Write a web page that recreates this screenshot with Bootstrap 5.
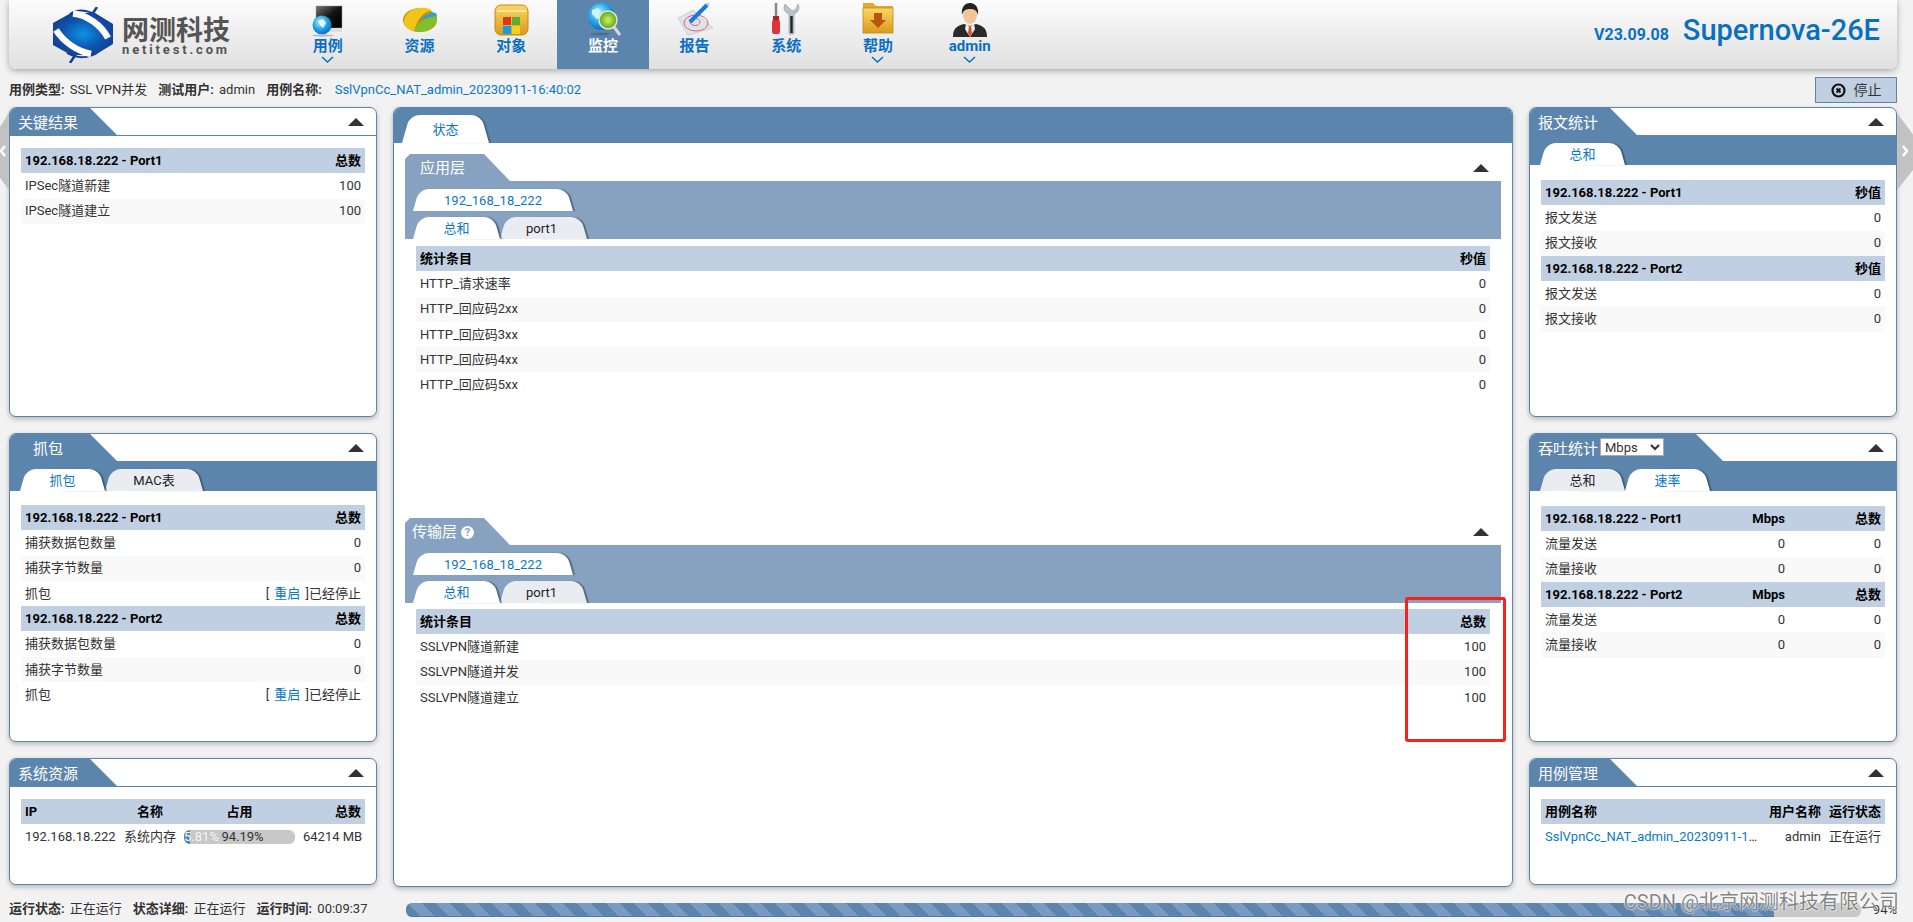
<!DOCTYPE html>
<html lang="zh">
<head>
<meta charset="UTF-8" />
<title>Supernova-26E 监控</title>
<link href="https://cdn.jsdelivr.net/npm/bootstrap@5.3.2/dist/css/bootstrap.min.css" rel="stylesheet" />
<style>
  html, body { height: 100%; }
  body { background: #f2f2f2; font: 13px/1.2 Roboto, "Noto Sans CJK SC", sans-serif; color: #333; overflow: hidden; position: relative; }
  a { color: #0a78c8; text-decoration: none; }

  /* header */
  .top-bar { height: 69px; margin: 0 16px 0 9px; background: linear-gradient(#fcfcfc, #e0e0e0); border-radius: 0 0 7px 7px; box-shadow: 0 2px 6px rgba(0,0,0,.3); }
  .logo-box { width: 273px; padding-left: 44px; }
  .logo-name { font-size: 27px; line-height: 30px; font-weight: 700; color: #555; margin: 2px 0 -3px 1px; }
  .logo-url { font-size: 13px; line-height: 13px; font-weight: 700; color: #555; letter-spacing: 2.85px; margin-left: 1px; }
  .nav-cell { width: 91.7px; height: 69px; padding: 3px 0 0; color: #0a6fc2; font-size: 15px; line-height: 18px; font-weight: 700; text-align: center; }
  .nav-cell:hover { color: #0a6fc2; }
  .nav-cell.on { background: #5c85ae; color: #fff; }
  .nav-cell svg.ico { display: block; margin: 0 auto; width: 40px; height: 34px; }
  .nav-cell .chev { display: block; margin: 1px auto 0; width: 13px; height: 7px; }
  .ver-box { color: #0a6fc2; padding-right: 17px; padding-top: 13px; }
  .ver-no { font-size: 16px; font-weight: 700; margin-right: 14px; }
  .ver-name { font-size: 29px; font-weight: 500; }

  /* info row */
  .info-row { height: 26px; margin: 8px 16px 4px 9px; }
  .lbl { font-weight: 600; margin-right: 2px; }
  .grp { margin-left: 11px; }
  .stop-btn { width: 82px; height: 26px; padding: 0; background: #c0d0e2; border: 1px solid #5c85ae; border-radius: 0; font-size: 14px; color: #333; }

  /* panels */
  .main-row { height: 780px; margin: 0 16px 0 9px; gap: 16px; }
  .side-col { width: 368px; flex: none; gap: 16px; }
  .pane { background: #fff; border: 1px solid #5c85ae; border-radius: 7px; overflow: hidden; box-shadow: 0 2px 5px rgba(0,0,0,.25); }
  .pane-a { height: 310px; }
  .pane-b { height: 309px; }
  .pane-c { height: 127px; }
  .pane-head { height: 27px; border-bottom: 1px solid #5c85ae; box-sizing: content-box; }
  .pane-head.plain { border-bottom: 0; }
  .slant-tab { width: 107px; height: 100%; background: #5c85ae; color: #fff; font-size: 15px; padding: 6px 0 0 8px; clip-path: polygon(0 0, calc(100% - 27px) 0, 100% 100%, 0 100%); }
  .slant-tab.wide { width: 193px; }
  .slant-tab.ind2 { padding-left: 23px; }
  .fold-mark { width: 0; height: 0; margin-right: 12px; border-left: 8px solid transparent; border-right: 8px solid transparent; border-bottom: 8px solid #333; }
  .rate-select { width: 64px; height: 18px; margin: -2px 0 0 2px; padding: 0; font-size: 13px; border: 1px solid #aaa; background-color: #fff; color: #333; }

  /* strips with tabs */
  .tab-strip { height: 30px; padding: 8px 0 0 10px; background: #5c85ae; }
  .soft-tab { position: relative; height: 22px; color: #222; line-height: 23px; text-align: center; font-size: 13px; z-index: 0; }
  .soft-tab::before, .soft-tab::after { content: ""; position: absolute; top: 0; bottom: 0; width: 55%; background: #e9edf2; z-index: -1; transform-origin: bottom; }
  .soft-tab::before { left: 0; border-radius: 9px 0 0 0; transform: skewX(-16deg); }
  .soft-tab::after { right: 0; border-radius: 0 9px 0 0; transform: skewX(16deg); box-shadow: 2px 0 1px rgba(50,60,70,.55); }
  .soft-tab.on { color: #0a78c8; z-index: 1; }
  .soft-tab.on::before, .soft-tab.on::after { background: #fff; }
  .w-85 { width: 85px; }
  .w-87 { width: 87px; }
  .w-97 { width: 98px; }
  .w-160 { width: 160px; }
  .pane-body { padding: 15px 11px 0 11px; }
  .pane-body.near { padding-top: 12px; }
  .pane-body.snug { padding-top: 14px; }

  /* tables */
  .stat-tb { table-layout: fixed; font-size: 13px; --bs-table-bg: transparent; }
  .stat-tb>tbody>tr>* { height: 25.3px; padding: 0 4px; border-bottom: 0; vertical-align: middle; color: #333; box-shadow: none; white-space: nowrap; }
  .stat-tb>tbody>tr>th { background: #c0d0e2; color: #000; font-weight: 700; }
  .stat-tb>tbody>tr.alt>td { background: #f9f9f9; }
  .stat-tb a.re-link { margin: 0 2px; }
  .num { text-align: right; }
  .c-ip { width: 99px; }
  .c-nm { width: 60px; text-align: center; }
  .c-use { width: 119px; text-align: center; }
  .c-case { width: 221px; }
  .c-usr { width: 63px; text-align: right; }
  .c-st { width: 60px; text-align: right; }
  .c-mb { width: 96px; text-align: right; }
  .mem-bar { height: 14px; border-radius: 6px; background: #c8c8c8; font-size: 13px; line-height: 14px; }
  .mem-bar .progress-bar { overflow: visible; background: #5c85ae; color: #f4f4f4; display: block; text-align: left; white-space: nowrap; }
  .mem-rest { margin-left: 31px; color: #333; }

  /* centre */
  .mid-pane { position: relative; flex: 1 1 0; }
  .mid-strip { height: 35px; padding: 7px 0 0 8px; background: #5c85ae; }
  .big-tab { width: 87px; height: 28px; line-height: 30px; }
  .big-tab::after { box-shadow: 2px 0 1px rgba(50,60,70,.4); }
  .sec-wrap { padding: 11px 11px 0; }
  .sect { height: 364px; }
  .sec-head { height: 27px; }
  .sec-tab { width: 105px; height: 100%; background: #86a2c0; color: #fff; font-size: 15px; padding: 5px 0 0 15px; clip-path: polygon(0 5px, 5px 0, 79px 0, 100% 100%, 0 100%); }
  .sec-tab.ind { padding-left: 7px; }
  .q-mark { display: inline-block; width: 13px; height: 13px; margin-left: 4px; border-radius: 50%; background: #fff; color: #86a2c0; font: 700 11px/13px Roboto, sans-serif; text-align: center; vertical-align: 1px; }
  .sec-strip { height: 58px; padding: 8px 0 0 8px; background: #86a2c0; gap: 6px; }
  .sec-tb { padding: 7px 11px 0; }
  .sec-tb.tight { padding-top: 6px; }
  .red-box { position: absolute; right: 6px; top: 489px; width: 101px; height: 145px; border: 3px solid #f5231a; border-radius: 3px; pointer-events: none; }

  /* footer */
  .foot-row { height: 18px; margin: 14px 16px 0 9px; }
  .foot-text { width: 397px; flex: none; padding-bottom: 2px; }
  .run-bar { height: 14px; flex: 1 1 0; border-radius: 6px; background: #c8c8c8; }
  .run-bar .progress-bar { background: repeating-linear-gradient(45deg, #5c85ae 0 10px, #7a9abf 10px 20px); border-bottom: 1px solid #4f7aa5; }
  .run-pct { width: 36px; flex: none; text-align: right; font-size: 13px; }

  /* overlays */
  .side-flap { position: absolute; top: 113px; height: 77px; background: #c2c2c2; }
  .side-flap svg { display: block; position: absolute; top: 32px; }
  .flap-l { left: 0; width: 9px; clip-path: polygon(100% 0, 0 18%, 0 84%, 100% 100%); }
  .flap-l svg { left: 0; }
  .flap-r { right: 0; width: 16px; clip-path: polygon(0 0, 100% 28%, 100% 74%, 0 100%); }
  .flap-r svg { left: 4px; }
  .water-mark { position: absolute; right: 14px; bottom: 8px; font-size: 20px; line-height: 24px; color: rgba(110,110,110,.85); text-shadow: 0 0 2px #fff, 0 0 2px #fff; white-space: nowrap; }
</style>
</head>
<body>

<svg width="0" height="0" class="position-absolute">
  <defs>
    <radialGradient id="hexFill" cx="50%" cy="50%" r="55%"><stop offset="0" stop-color="#0b93e4"/><stop offset=".6" stop-color="#0f55ae"/><stop offset="1" stop-color="#123f92"/></radialGradient>
    <linearGradient id="gold" x1="0" y1="0" x2="0" y2="1"><stop offset="0" stop-color="#fbd766"/><stop offset="1" stop-color="#d99a1c"/></linearGradient>
    <linearGradient id="screen" x1="0" y1="0" x2="1" y2="1"><stop offset="0" stop-color="#777"/><stop offset=".5" stop-color="#111"/><stop offset="1" stop-color="#000"/></linearGradient>
    <radialGradient id="ball" cx="40%" cy="35%" r="65%"><stop offset="0" stop-color="#bfeeff"/><stop offset=".55" stop-color="#28a9ea"/><stop offset="1" stop-color="#0a6fc2"/></radialGradient>
    <radialGradient id="lens" cx="50%" cy="50%" r="50%"><stop offset="0" stop-color="#d4ee6a"/><stop offset="1" stop-color="#5aa516"/></radialGradient>
  </defs>
</svg>

<!-- 顶部导航 -->
<header class="top-bar d-flex">
  <div class="logo-box d-flex align-items-center">
    <svg width="60" height="56" viewBox="0 0 60 56" class="me-2">
      <path d="M36 12 44 0M25 44 17 56" stroke="#123f92" stroke-width="2.5" fill="none"/>
      <path d="M17 7C26 1 36 3 46 10M14 46C24 52 36 51 44 46" stroke="#123f92" stroke-width="2" fill="none"/>
      <polygon points="0,16 18,6 42,6 60,17 60,37 42,48 18,48 0,38" fill="url(#hexFill)"/>
      <path d="M20 6.5C34 8 48 18 55 31" stroke="#fff" stroke-width="6.5" fill="none"/>
      <path d="M3 23C11 35 24 44 38 47" stroke="#fff" stroke-width="6.5" fill="none"/>
    </svg>
    <div>
      <div class="logo-name">网测科技</div>
      <div class="logo-url">netitest.com</div>
    </div>
  </div>

  <nav class="nav flex-nowrap">
    <a class="nav-cell" href="#">
      <svg class="ico" viewBox="0 0 40 34"><rect x="8" y="3" width="26" height="22" fill="url(#screen)" stroke="#999" stroke-width=".5"/><rect x="14" y="25" width="20" height="4" fill="#ddd"/><circle cx="14" cy="22" r="9.5" fill="url(#ball)"/><path d="M10 18l5-2 3 4-3 5-3-3z" fill="#e6f6fc"/><ellipse cx="15" cy="32.5" rx="11" ry="1.2" fill="#bbb"/></svg>
      用例
      <svg class="chev" viewBox="0 0 13 7"><path d="M1 1l5.500 5L12 1" fill="none" stroke="#0a6fc2" stroke-width="1.500"/></svg>
    </a>
    <a class="nav-cell" href="#">
      <svg class="ico" viewBox="0 0 40 34"><ellipse cx="20" cy="17" rx="17" ry="12" fill="#c79205"/><path d="M4 19C4 7 20 1 32 7 24 9 18 14 14 28 8 27 4 23 4 19z" fill="#f2c41a"/><path d="M14 28C18 19 25 15 37 13 38 18 34 25 25 28 21 29 17 29 14 28z" fill="#7dc12b"/><path d="M19 18C24 12 30 9 36 10l1 3C30 14 25 15 19 18z" fill="#29a3df"/></svg>
      资源
    </a>
    <a class="nav-cell" href="#">
      <svg class="ico" viewBox="0 0 40 34"><rect x="4" y="2" width="33" height="30" rx="6" fill="url(#gold)" stroke="#c48a12"/><path d="M6 8h29" stroke="#fff2b8" stroke-width="1.500"/><rect x="12" y="14" width="8" height="8" fill="#d9381e"/><rect x="21" y="14" width="8" height="8" fill="#5db02e"/><rect x="12" y="23" width="8" height="8" fill="#1b9ed8"/><rect x="21" y="23" width="8" height="8" fill="#f2d21b"/></svg>
      对象
    </a>
    <a class="nav-cell on" href="#">
      <svg class="ico" viewBox="0 0 40 34"><circle cx="18.500" cy="13.500" r="13.500" fill="url(#ball)"/><path d="M9 7l6-2 3 3-2 3 3 3-5 2-5-5z" fill="#d4f2fc"/><path d="M31 24l6 8" stroke="#d8d8d8" stroke-width="3"/><circle cx="25" cy="17" r="9" fill="url(#lens)" stroke="#d9e6d0" stroke-width="1.500"/><ellipse cx="17" cy="31" rx="10" ry="1.500" fill="#4a6e92"/></svg>
      监控
    </a>
    <a class="nav-cell" href="#">
      <svg class="ico" viewBox="0 0 40 34"><polygon points="3,15 18,7 38,25 13,32" fill="#dde3ea" stroke="#bcc5cf" stroke-width=".7"/><ellipse cx="21" cy="20" rx="12" ry="8" fill="none" stroke="#e8606a" stroke-width="1"/><ellipse cx="20" cy="19" rx="5" ry="3.500" fill="none" stroke="#e8606a"/><path d="M15 19 32 2" stroke="#1b78d8" stroke-width="4"/><path d="M32 2l2-2" stroke="#9cd0f4" stroke-width="3"/></svg>
      报告
    </a>
    <a class="nav-cell" href="#">
      <svg class="ico" viewBox="0 0 40 34"><path d="M10 0v14" stroke="#888" stroke-width="2.500"/><rect x="7" y="13" width="6" height="5" fill="#b9231f"/><rect x="6" y="17" width="8" height="14" rx="2" fill="#d9363a"/><path d="M19 1c-2 4-1 8 4 10v19c0 2 5 2 5 0V11c5-2 6-6 4-10l-2 5-3 2-3-2z" fill="#b7c4cd" stroke="#8b99a3" stroke-width=".6"/><rect x="24.300" y="13" width="2.400" height="17" fill="#222"/></svg>
      系统
    </a>
    <a class="nav-cell" href="#">
      <svg class="ico" viewBox="0 0 40 34"><path d="M5 0h10l3 3h17v27H5z" fill="#e2a92a"/><rect x="5" y="5" width="30" height="25" fill="url(#gold)" stroke="#c48a12" stroke-width=".8"/><polygon points="16,10 24,10 24,17 28,17 20,25 12,17 16,17" fill="#b9560c"/></svg>
      帮助
      <svg class="chev" viewBox="0 0 13 7"><path d="M1 1l5.500 5L12 1" fill="none" stroke="#0a6fc2" stroke-width="1.500"/></svg>
    </a>
    <a class="nav-cell" href="#">
      <svg class="ico" viewBox="0 0 40 34"><path d="M3 34c0-8 3-11 11-13l6 2 6-2c8 2 11 5 11 13z" fill="#2a2a2a"/><path d="M16 21l4 3 4-3 1 5-5 8-5-8z" fill="#f2f2f2"/><path d="M19 23h2l1 7-2 4-2-4z" fill="#d9541e"/><ellipse cx="20" cy="12" rx="7" ry="9" fill="#f3c49a"/><path d="M12 12C11 4 15 0 20 0s9 4 8 12c-1-4-3-6-8-6s-7 2-8 6z" fill="#222"/></svg>
      admin
      <svg class="chev" viewBox="0 0 13 7"><path d="M1 1l5.500 5L12 1" fill="none" stroke="#0a6fc2" stroke-width="1.500"/></svg>
    </a>
  </nav>

  <div class="ver-box ms-auto d-flex align-items-baseline">
    <span class="ver-no">V23.09.08</span>
    <span class="ver-name">Supernova-26E</span>
  </div>
</header>

<!-- 用例信息 -->
<div class="info-row d-flex align-items-center justify-content-between">
  <div class="d-flex">
    <span><b class="lbl">用例类型:</b> SSL VPN并发</span>
    <span class="grp"><b class="lbl">测试用户:</b> admin</span>
    <span class="grp"><b class="lbl">用例名称:</b></span>
    <a class="grp" href="#">SslVpnCc_NAT_admin_20230911-16:40:02</a>
  </div>
  <button class="btn stop-btn d-flex align-items-center justify-content-center gap-2">
    <svg width="15" height="15" viewBox="0 0 15 15"><circle cx="7.5" cy="7.5" r="6" fill="none" stroke="#111" stroke-width="2.200"/><path d="M5.500 5.500l4 4M9.500 5.500l-4 4" stroke="#111" stroke-width="2"/></svg>
    停止
  </button>
</div>

<main class="main-row d-flex">
  <!-- 左列 -->
  <div class="side-col d-flex flex-column">
    <section class="pane pane-a">
      <div class="pane-head d-flex justify-content-between align-items-center">
        <div class="slant-tab">关键结果</div><i class="fold-mark"></i>
      </div>
      <div class="pane-body near">
        <table class="table mb-0 stat-tb"><tbody>
          <tr><th>192.168.18.222 - Port1</th><th class="num">总数</th></tr>
          <tr><td>IPSec隧道新建</td><td class="num">100</td></tr>
          <tr class="alt"><td>IPSec隧道建立</td><td class="num">100</td></tr>
        </tbody></table>
      </div>
    </section>

    <section class="pane pane-b">
      <div class="pane-head plain d-flex justify-content-between align-items-center">
        <div class="slant-tab ind2">抓包</div><i class="fold-mark"></i>
      </div>
      <div class="tab-strip d-flex">
        <div class="soft-tab on w-85">抓包</div>
        <div class="soft-tab w-97">MAC表</div>
      </div>
      <div class="pane-body snug">
        <table class="table mb-0 stat-tb"><tbody>
          <tr><th>192.168.18.222 - Port1</th><th class="num">总数</th></tr>
          <tr><td>捕获数据包数量</td><td class="num">0</td></tr>
          <tr class="alt"><td>捕获字节数量</td><td class="num">0</td></tr>
          <tr><td>抓包</td><td class="num">[ <a class="re-link" href="#">重启</a> ]已经停止</td></tr>
          <tr><th>192.168.18.222 - Port2</th><th class="num">总数</th></tr>
          <tr><td>捕获数据包数量</td><td class="num">0</td></tr>
          <tr class="alt"><td>捕获字节数量</td><td class="num">0</td></tr>
          <tr><td>抓包</td><td class="num">[ <a class="re-link" href="#">重启</a> ]已经停止</td></tr>
        </tbody></table>
      </div>
    </section>

    <section class="pane pane-c">
      <div class="pane-head d-flex justify-content-between align-items-center">
        <div class="slant-tab">系统资源</div><i class="fold-mark"></i>
      </div>
      <div class="pane-body near">
        <table class="table mb-0 stat-tb"><tbody>
          <tr><th class="c-ip">IP</th><th class="c-nm">名称</th><th class="c-use">占用</th><th class="num">总数</th></tr>
          <tr>
            <td>192.168.18.222</td><td class="c-nm">系统内存</td>
            <td><div class="progress mem-bar"><div class="progress-bar" style="width:5.81%">5.81%</div><span class="mem-rest">94.19%</span></div></td>
            <td class="num">64214 MB</td>
          </tr>
        </tbody></table>
      </div>
    </section>
  </div>

  <!-- 中列 -->
  <section class="pane mid-pane">
    <div class="mid-strip"><div class="soft-tab on big-tab">状态</div></div>
    <div class="sec-wrap">
      <div class="sect">
        <div class="sec-head d-flex justify-content-between align-items-center">
          <div class="sec-tab">应用层</div><i class="fold-mark"></i>
        </div>
        <div class="sec-strip d-flex flex-column">
          <div class="d-flex"><div class="soft-tab on w-160">192_168_18_222</div></div>
          <div class="d-flex"><div class="soft-tab on w-87">总和</div><div class="soft-tab w-87 pe-1">port1</div></div>
        </div>
        <div class="sec-tb">
          <table class="table mb-0 stat-tb"><tbody>
            <tr><th>统计条目</th><th class="num">秒值</th></tr>
            <tr><td>HTTP_请求速率</td><td class="num">0</td></tr>
            <tr class="alt"><td>HTTP_回应码2xx</td><td class="num">0</td></tr>
            <tr><td>HTTP_回应码3xx</td><td class="num">0</td></tr>
            <tr class="alt"><td>HTTP_回应码4xx</td><td class="num">0</td></tr>
            <tr><td>HTTP_回应码5xx</td><td class="num">0</td></tr>
          </tbody></table>
        </div>
      </div>
      <div class="sect">
        <div class="sec-head d-flex justify-content-between align-items-center">
          <div class="sec-tab ind">传输层<span class="q-mark">?</span></div><i class="fold-mark"></i>
        </div>
        <div class="sec-strip d-flex flex-column">
          <div class="d-flex"><div class="soft-tab on w-160">192_168_18_222</div></div>
          <div class="d-flex"><div class="soft-tab on w-87">总和</div><div class="soft-tab w-87 pe-1">port1</div></div>
        </div>
        <div class="sec-tb tight">
          <table class="table mb-0 stat-tb"><tbody>
            <tr><th>统计条目</th><th class="num">总数</th></tr>
            <tr><td>SSLVPN隧道新建</td><td class="num">100</td></tr>
            <tr class="alt"><td>SSLVPN隧道并发</td><td class="num">100</td></tr>
            <tr><td>SSLVPN隧道建立</td><td class="num">100</td></tr>
          </tbody></table>
        </div>
      </div>
    </div>
    <div class="red-box"></div>
  </section>

  <!-- 右列 -->
  <div class="side-col d-flex flex-column">
    <section class="pane pane-a">
      <div class="pane-head plain d-flex justify-content-between align-items-center">
        <div class="slant-tab">报文统计</div><i class="fold-mark"></i>
      </div>
      <div class="tab-strip d-flex"><div class="soft-tab on w-85">总和</div></div>
      <div class="pane-body">
        <table class="table mb-0 stat-tb"><tbody>
          <tr><th>192.168.18.222 - Port1</th><th class="num">秒值</th></tr>
          <tr><td>报文发送</td><td class="num">0</td></tr>
          <tr class="alt"><td>报文接收</td><td class="num">0</td></tr>
          <tr><th>192.168.18.222 - Port2</th><th class="num">秒值</th></tr>
          <tr><td>报文发送</td><td class="num">0</td></tr>
          <tr class="alt"><td>报文接收</td><td class="num">0</td></tr>
        </tbody></table>
      </div>
    </section>

    <section class="pane pane-b">
      <div class="pane-head plain d-flex justify-content-between align-items-center">
        <div class="slant-tab wide d-flex align-items-start">吞吐统计<select class="rate-select"><option>Mbps</option></select></div><i class="fold-mark"></i>
      </div>
      <div class="tab-strip d-flex">
        <div class="soft-tab w-85">总和</div>
        <div class="soft-tab on w-85">速率</div>
      </div>
      <div class="pane-body">
        <table class="table mb-0 stat-tb"><tbody>
          <tr><th>192.168.18.222 - Port1</th><th class="c-mb">Mbps</th><th class="c-mb">总数</th></tr>
          <tr><td>流量发送</td><td class="num">0</td><td class="num">0</td></tr>
          <tr class="alt"><td>流量接收</td><td class="num">0</td><td class="num">0</td></tr>
          <tr><th>192.168.18.222 - Port2</th><th class="num">Mbps</th><th class="num">总数</th></tr>
          <tr><td>流量发送</td><td class="num">0</td><td class="num">0</td></tr>
          <tr class="alt"><td>流量接收</td><td class="num">0</td><td class="num">0</td></tr>
        </tbody></table>
      </div>
    </section>

    <section class="pane pane-c">
      <div class="pane-head d-flex justify-content-between align-items-center">
        <div class="slant-tab">用例管理</div><i class="fold-mark"></i>
      </div>
      <div class="pane-body near">
        <table class="table mb-0 stat-tb"><tbody>
          <tr><th class="c-case">用例名称</th><th class="c-usr">用户名称</th><th class="c-st">运行状态</th></tr>
          <tr><td class="text-truncate"><a href="#">SslVpnCc_NAT_admin_20230911-16:40:02</a></td><td class="c-usr">admin</td><td class="c-st">正在运行</td></tr>
        </tbody></table>
      </div>
    </section>
  </div>
</main>

<!-- 底部状态 -->
<footer class="foot-row d-flex align-items-center">
  <div class="foot-text d-flex">
    <span><b class="lbl">运行状态:</b> 正在运行</span>
    <span class="grp"><b class="lbl">状态详细:</b> 正在运行</span>
    <span class="grp"><b class="lbl">运行时间:</b> 00:09:37</span>
  </div>
  <div class="progress run-bar"><div class="progress-bar" style="width:94%"></div></div>
  <div class="run-pct">94%</div>
</footer>

<div class="side-flap flap-l"><svg width="6" height="12" viewBox="0 0 6 12"><path d="M5 1 1 6l4 5" fill="none" stroke="#fff" stroke-width="2.500"/></svg></div>
<div class="side-flap flap-r"><svg width="8" height="12" viewBox="0 0 8 12"><path d="M2 1l4 5-4 5" fill="none" stroke="#fff" stroke-width="2.500"/></svg></div>
<div class="water-mark">CSDN @北京网测科技有限公司</div>

<script src="https://cdn.jsdelivr.net/npm/bootstrap@5.3.2/dist/js/bootstrap.bundle.min.js"></script>
</body>
</html>
